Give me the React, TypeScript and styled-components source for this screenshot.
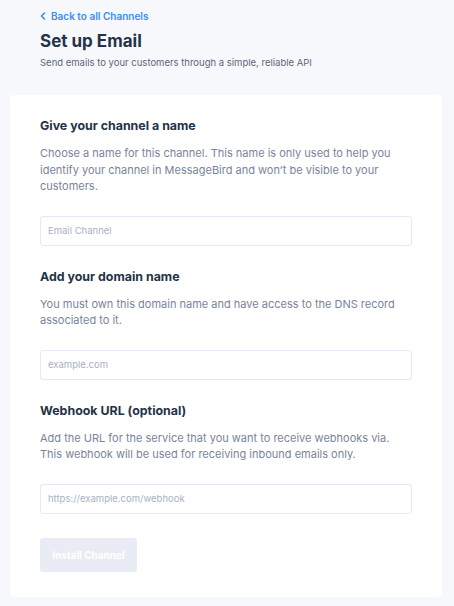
import styled, { createGlobalStyle } from "styled-components";

const GlobalStyle = createGlobalStyle`
  html, body {
    margin: 0;
    padding: 0;
    background: #f7f8fc;
  }
  body {
    font-family: Inter, "Noto Sans", sans-serif;
    -webkit-font-smoothing: antialiased;
  }
`;

const fields = [
  {
    title: "Give your channel a name",
    text: "Choose a name for this channel. This name is only used to help you identify your channel in MessageBird and won’t be visible to your customers.",
    placeholder: "Email Channel",
  },
  {
    title: "Add your domain name",
    text: "You must own this domain name and have access to the DNS record associated to it.",
    placeholder: "example.com",
  },
  {
    title: "Webhook URL (optional)",
    text: "Add the URL for the service that you want to receive webhooks via. This webhook will be used for receiving inbound emails only.",
    placeholder: "https://example.com/webhook",
  },
];

const App = () => {
  return (
    <>
      <GlobalStyle />
      <Page>
        <Header>
          <BackLink href="#">
            <svg width="6" height="8" viewBox="0 0 6 8">
              <path
                d="M4.5 1 L1.5 4 L4.5 7"
                fill="none"
                stroke="currentColor"
                strokeWidth="1.6"
                strokeLinecap="round"
                strokeLinejoin="round"
              />
            </svg>
            Back to all Channels
          </BackLink>
          <Title>Set up Email</Title>
          <Subtitle>Send emails to your customers through a simple, reliable API</Subtitle>
        </Header>
        <Card>
          {fields.map((f) => (
            <Field key={f.title}>
              <FieldTitle>{f.title}</FieldTitle>
              <FieldText>{f.text}</FieldText>
              <Input placeholder={f.placeholder} />
            </Field>
          ))}
          <InstallBtn disabled>Install Channel</InstallBtn>
        </Card>
      </Page>
    </>
  );
};

export default App;

const Page = styled.div`
  width: 454px;
  height: 606px;
  box-sizing: border-box;
  padding: 0 12px 9px 10px;
  display: flex;
  flex-direction: column;
`;

const Header = styled.div`
  padding: 9px 0 0 30px;
  height: 95px;
  flex-shrink: 0;
  box-sizing: border-box;
  display: flex;
  flex-direction: column;
`;

const BackLink = styled.a`
  display: flex;
  align-items: center;
  gap: 5px;
  color: #3b8ef5;
  font-size: 10px;
  font-weight: 600;
  text-decoration: none;
  line-height: 14px;
`;

const Title = styled.h1`
  margin: 6px 0 0;
  font-size: 17px;
  font-weight: 700;
  color: #243347;
  line-height: 24px;
`;

const Subtitle = styled.p`
  margin: 3px 0 0;
  font-size: 9.5px;
  color: #5c6678;
  line-height: 14px;
`;

const Card = styled.div`
  flex: 1;
  background: #ffffff;
  border-radius: 4px;
  padding: 22px 30px 24px;
  display: flex;
  flex-direction: column;
`;

const Field = styled.div`
  display: flex;
  flex-direction: column;
  margin-bottom: 22px;
`;

const FieldTitle = styled.h2`
  margin: 0;
  font-size: 12.4px;
  font-weight: 700;
  color: #243347;
  line-height: 18px;
`;

const FieldText = styled.p`
  margin: 10px 0 0;
  font-size: 11px;
  color: #7a849a;
  line-height: 16.5px;
`;

const Input = styled.input`
  margin-top: 21px;
  height: 30px;
  box-sizing: border-box;
  border: 1px solid #e4eaf5;
  border-radius: 3px;
  padding: 0 7px;
  font-family: inherit;
  font-size: 9.5px;
  color: #243347;
  outline: none;
  &::placeholder {
    color: #a9b1c2;
  }
`;

const InstallBtn = styled.button`
  align-self: flex-start;
  margin-top: 2px;
  width: 97px;
  height: 34px;
  border: none;
  border-radius: 3px;
  background: #e9ecf4;
  color: #ffffff;
  font-family: inherit;
  font-size: 10px;
  font-weight: 700;
`;
